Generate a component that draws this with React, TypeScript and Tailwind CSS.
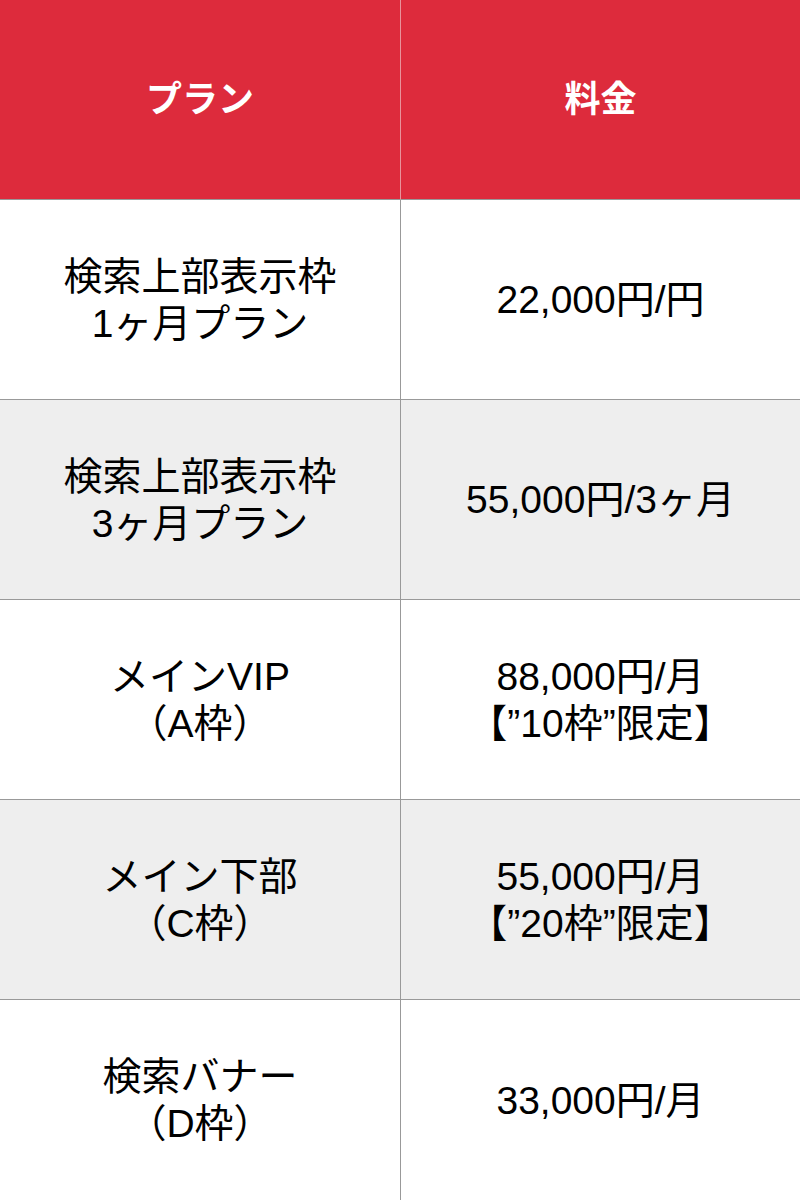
import React from "react";

type Row = { plan: string[]; price: string[] };

const rows: Row[] = [
  { plan: ["検索上部表示枠", "1ヶ月プラン"], price: ["22,000円/円"] },
  { plan: ["検索上部表示枠", "3ヶ月プラン"], price: ["55,000円/3ヶ月"] },
  { plan: ["メインVIP", "（A枠）"], price: ["88,000円/月", "【”10枠”限定】"] },
  { plan: ["メイン下部", "（C枠）"], price: ["55,000円/月", "【”20枠”限定】"] },
  { plan: ["検索バナー", "（D枠）"], price: ["33,000円/月"] },
];

const font = {
  fontFamily: '"Liberation Sans", Arial, "Noto Sans CJK JP", sans-serif',
};

function Cell({
  lines,
  grey,
  right,
  last,
}: {
  lines: string[];
  grey: boolean;
  right?: boolean;
  last?: boolean;
}) {
  return (
    <div
      className={`flex h-[200px] flex-col items-center justify-center border-[#999999] text-[39px] leading-[47px] text-black ${
        grey ? "bg-[#eeeeee]" : "bg-white"
      } ${right ? "" : "border-r"} ${last ? "" : "border-b"}`}
    >
      {lines.map((l) => (
        <div key={l}>{l}</div>
      ))}
    </div>
  );
}

export default function App() {
  return (
    <div className="w-[800px] bg-white" style={font}>
      <div className="grid grid-cols-[401px_1fr]">
        <div className="flex h-[200px] items-center justify-center border-r border-b border-r-[#e8939b] border-b-[#999999] bg-[#dd2b3c] text-[36px] font-bold text-white">
          プラン
        </div>
        <div className="flex h-[200px] items-center justify-center border-b border-[#999999] bg-[#dd2b3c] text-[36px] font-bold text-white">
          料金
        </div>
        {rows.map((r, i) => (
          <React.Fragment key={i}>
            <Cell lines={r.plan} grey={i % 2 === 1} last={i === rows.length - 1} />
            <Cell lines={r.price} grey={i % 2 === 1} right last={i === rows.length - 1} />
          </React.Fragment>
        ))}
      </div>
    </div>
  );
}
